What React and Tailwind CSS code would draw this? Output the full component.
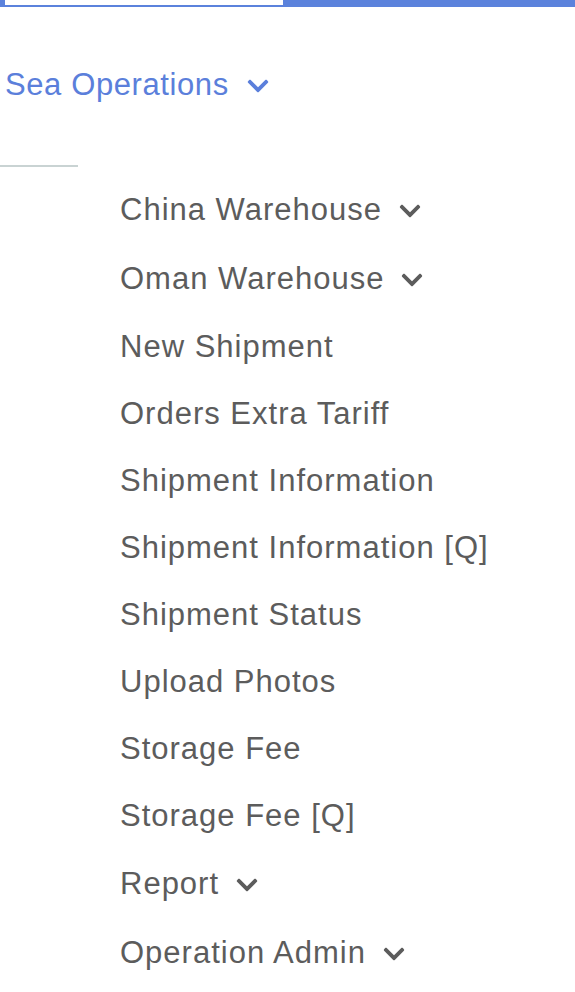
const subItems = [
  { label: 'China Warehouse', caret: true },
  { label: 'Oman Warehouse', caret: true },
  { label: 'New Shipment' },
  { label: 'Orders Extra Tariff' },
  { label: 'Shipment Information' },
  { label: 'Shipment Information [Q]' },
  { label: 'Shipment Status' },
  { label: 'Upload Photos' },
  { label: 'Storage Fee' },
  { label: 'Storage Fee [Q]' },
  { label: 'Report', caret: true },
  { label: 'Operation Admin', caret: true },
];

function Chevron({ className }) {
  return (
    <svg viewBox="0 0 448 512" className={className} fill="currentColor">
      <path d="M207.029 381.476L12.686 187.132c-9.373-9.373-9.373-24.569 0-33.941l22.667-22.667c9.357-9.357 24.522-9.375 33.901-.04L224 284.505l154.745-154.021c9.379-9.335 24.544-9.317 33.901.04l22.667 22.667c9.373 9.373 9.373 24.569 0 33.941L240.971 381.476c-9.373 9.372-24.569 9.372-33.942 0z" />
    </svg>
  );
}

export default function App() {
  return (
    <div className="w-[575px] h-[992px] bg-white overflow-hidden font-['Liberation_Sans',Arial,sans-serif]">
      <div className="h-[7px] bg-[#5b82dc]">
        <div className="ml-[5px] w-[278px] h-[5px] bg-white" />
      </div>

      <div className="h-[160px] flex flex-col">
        <div className="flex items-center h-[157px]">
          <a className="flex items-center pl-[5px] text-[31px] tracking-[0.6px] text-[#5b7fdb] cursor-pointer">
            <span>Sea Operations</span>
            <Chevron className="ml-[18px] w-[22px] h-[24px]" />
          </a>
        </div>
        <div className="mt-auto w-[78px] h-[2px] bg-[#c9d3d3]" />
      </div>

      <ul className="pl-[120px] mt-[9px]">
        {subItems.map(item => (
          <li
            key={item.label}
            className={`flex items-center text-[31px] tracking-[1px] text-[#5c5c5c] ${item.caret ? 'h-[69px]' : 'h-[67px]'}`}
          >
            <span>{item.label}</span>
            {item.caret && <Chevron className="ml-[17px] w-[22px] h-[24px]" />}
          </li>
        ))}
      </ul>
    </div>
  );
}
